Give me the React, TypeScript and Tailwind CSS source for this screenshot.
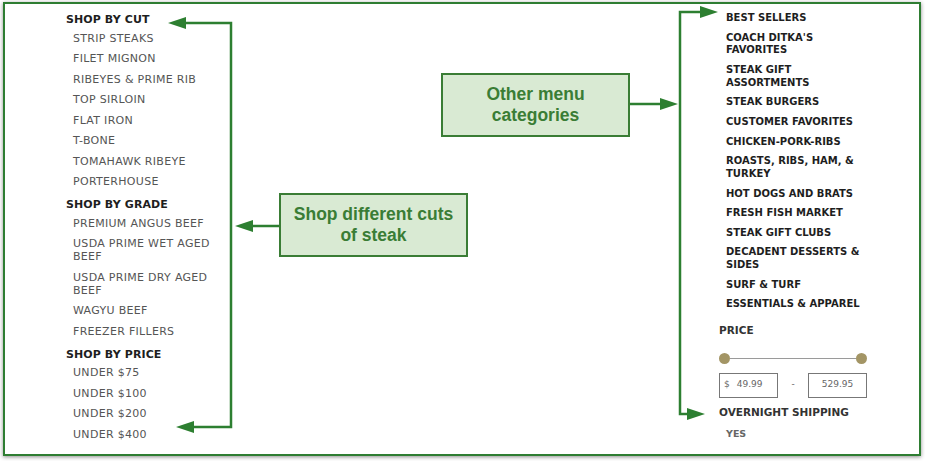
import { type ReactNode } from 'react';

const cutLinks = ['STRIP STEAKS', 'FILET MIGNON', 'RIBEYES & PRIME RIB', 'TOP SIRLOIN', 'FLAT IRON', 'T-BONE', 'TOMAHAWK RIBEYE', 'PORTERHOUSE'];
const gradeLinks = ['PREMIUM ANGUS BEEF', 'USDA PRIME WET AGED BEEF', 'USDA PRIME DRY AGED BEEF', 'WAGYU BEEF', 'FREEZER FILLERS'];
const priceLinks = ['UNDER $75', 'UNDER $100', 'UNDER $200', 'UNDER $400'];

const categories = [
    'BEST SELLERS',
    "COACH DITKA'S FAVORITES",
    'STEAK GIFT ASSORTMENTS',
    'STEAK BURGERS',
    'CUSTOMER FAVORITES',
    'CHICKEN-PORK-RIBS',
    'ROASTS, RIBS, HAM, & TURKEY',
    'HOT DOGS AND BRATS',
    'FRESH FISH MARKET',
    'STEAK GIFT CLUBS',
    'DECADENT DESSERTS & SIDES',
    'SURF & TURF',
    'ESSENTIALS & APPAREL',
];

const menuFont = "font-['DejaVu_Sans',sans-serif]";
const green = '#2d7f31';

function Group({ title, links, first }: { title: string; links: string[]; first?: boolean }) {
    return (
        <div className={first ? '' : 'mt-[6px]'}>
            <h3 className="mb-[1px] text-[11px] leading-[14px] font-bold tracking-[0.1px] text-[#1e1e1e]">{title}</h3>
            <ul className="w-[155px] pl-[7px]">
                {links.map((link) => (
                    <li key={link} className="py-[3.75px] text-[11px] leading-[13px] tracking-[0.3px] text-[#555]">
                        {link}
                    </li>
                ))}
            </ul>
        </div>
    );
}

function Callout({ className, children }: { className: string; children: ReactNode }) {
    return (
        <div
            className={`absolute flex items-center justify-center border-[2.5px] border-[#3a7d35] bg-[#d9ead3] text-center font-['Liberation_Sans',Arial,sans-serif] text-[17.5px] leading-[21px] font-bold text-[#3a7d35] ${className}`}
        >
            {children}
        </div>
    );
}

function Arrowhead({ x, y, dir }: { x: number; y: number; dir: 'left' | 'right' }) {
    const d = dir === 'left' ? `M${x} ${y} L${x + 18} ${y - 6} L${x + 18} ${y + 6} Z` : `M${x} ${y} L${x - 18} ${y - 6} L${x - 18} ${y + 6} Z`;
    return <path d={d} fill={green} />;
}

export default function App() {
    return (
        <div className="relative h-[461px] w-[925px] bg-white">
            {/* Menu panel */}
            <div className="ml-[3px] pt-[2px]">
                <div className={`flex h-[454px] w-[918px] border-2 border-[#2e7d32] bg-white shadow-[0_1px_4px_rgba(0,0,0,0.45)] ${menuFont}`}>
                    <div className="pt-[9px] pl-[61px]">
                        <Group title="SHOP BY CUT" links={cutLinks} first />
                        <Group title="SHOP BY GRADE" links={gradeLinks} />
                        <Group title="SHOP BY PRICE" links={priceLinks} />
                    </div>

                    <div className="ml-auto w-[200px] pt-[4.5px]">
                        <ul className="w-[145px] pl-[7px]">
                            {categories.map((c) => (
                                <li key={c} className="py-[3.45px] text-[10px] leading-[12.75px] font-bold text-[#1e1e1e]">
                                    {c}
                                </li>
                            ))}
                        </ul>

                        <h3 className="mt-[8px] text-[10.5px] leading-[14px] font-bold text-[#333]">PRICE</h3>

                        {/* Range slider */}
                        <div className="mt-[16px] flex w-[148px] items-center">
                            <span className="h-[11px] w-[11px] rounded-full bg-[#a39565]" />
                            <span className="h-px flex-1 bg-[#9a9a9a]" />
                            <span className="h-[11px] w-[11px] rounded-full bg-[#a39565]" />
                        </div>

                        <div className="mt-[9px] flex items-center text-[9px] text-[#666]">
                            <div className="flex h-[25px] w-[59px] items-center border border-[#777] px-[4px]">
                                <span>$</span>
                                <span className="ml-[7px]">49.99</span>
                            </div>
                            <span className="w-[30px] text-center">-</span>
                            <div className="flex h-[25px] w-[59px] items-center justify-center border border-[#777]">529.95</div>
                        </div>

                        <h3 className="mt-[7.5px] text-[10.5px] leading-[14px] font-bold text-[#333]">OVERNIGHT SHIPPING</h3>
                        <p className="mt-[7.5px] pl-[7px] text-[9.5px] leading-[13px] font-semibold text-[#666]">YES</p>
                    </div>
                </div>
            </div>

            {/* Annotation callouts */}
            <Callout className="top-[193px] left-[279px] h-[64px] w-[189px]">
                Shop different cuts
                <br />
                of steak
            </Callout>
            <Callout className="top-[73px] left-[441px] h-[64px] w-[189px]">
                Other menu
                <br />
                categories
            </Callout>

            {/* Annotation arrows */}
            <svg className="pointer-events-none absolute inset-0" width={925} height={461}>
                <g stroke={green} strokeWidth={2.5} fill="none">
                    <polyline points="186,23 231,23 231,427 193,427" />
                    <line x1={279} y1={226} x2={252} y2={226} />
                    <polyline points="700,12 680,12 680,414 688,414" />
                    <line x1={630} y1={104} x2={661} y2={104} />
                </g>
                <Arrowhead x={168} y={23} dir="left" />
                <Arrowhead x={176} y={427} dir="left" />
                <Arrowhead x={235} y={226} dir="left" />
                <Arrowhead x={718} y={12} dir="right" />
                <Arrowhead x={678} y={104} dir="right" />
                <Arrowhead x={705} y={414} dir="right" />
            </svg>
        </div>
    );
}
